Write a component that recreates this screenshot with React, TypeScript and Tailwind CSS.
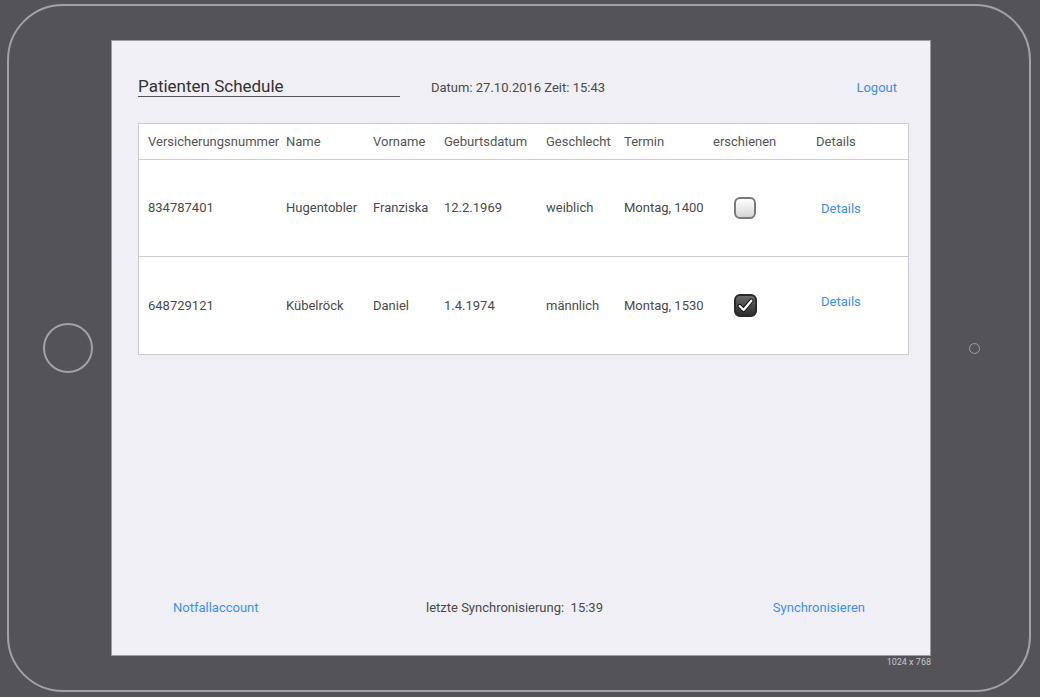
import React from "react";

const cols = [138, 87, 71, 102, 78, 89, 103];

function Box({ checked }: { checked: boolean }) {
  if (!checked) {
    return (
      <div className="w-[22px] h-[22px] rounded-[6px] border-2 border-[#7a7a7a] bg-gradient-to-b from-[#ffffff] to-[#d6d6d8]" />
    );
  }
  return (
    <div className="w-[23px] h-[23px] rounded-[6px] border-2 border-[#2a2a2a] bg-gradient-to-b from-[#6a6a6a] to-[#2e2e2e] flex items-center justify-center">
      <svg width="17" height="17" viewBox="0 0 16 16">
        <path d="M2.5 8.5 L6.2 12.2 L13.5 3.5" fill="none" stroke="#111" strokeWidth="4" strokeLinecap="round" strokeLinejoin="round" />
        <path d="M2.5 8.5 L6.2 12.2 L13.5 3.5" fill="none" stroke="#fff" strokeWidth="2.2" strokeLinecap="round" strokeLinejoin="round" />
      </svg>
    </div>
  );
}

const rows = [
  { nr: "834787401", name: "Hugentobler", vor: "Franziska", geb: "12.2.1969", ges: "weiblich", ter: "Montag, 1400", chk: false, dy: "mt-[2px]" },
  { nr: "648729121", name: "Kübelröck", vor: "Daniel", geb: "1.4.1974", ges: "männlich", ter: "Montag, 1530", chk: true, dy: "-mt-[8px]" },
];

export default function App() {
  return (
    <div className="w-[1040px] h-[697px] bg-[#545358] pt-[4px] pl-[7px] overflow-hidden" style={{ fontFamily: "Roboto, 'Liberation Sans', sans-serif" }}>
      <div className="w-[1024px] h-[688px] rounded-[56px] border-2 border-[#a2a1a6] flex items-center">
        <div className="ml-[34px] w-[50px] h-[50px] rounded-full border-2 border-[#a2a1a6] shrink-0" />
        <div className="relative ml-[18px] shrink-0">
          <div className="w-[820px] h-[616px] border border-[#9e9ea2] bg-[#efeff5] flex flex-col pl-[26px] pr-[21px]">
            <div className="flex items-end mt-[34px] h-[22px]">
              <div className="w-[262px] h-[22px] border-b border-[#555] text-[17px] leading-[20px] text-[#333] pt-[1px]">Patienten Schedule</div>
              <div className="ml-[31px] text-[13px] leading-[18px] text-[#4a4a4a]">Datum: 27.10.2016 Zeit: 15:43</div>
              <div className="ml-auto mr-[12px] text-[13px] leading-[18px] text-[#3b8ff5]">Logout</div>
            </div>
            <div className="mt-[26px] w-[771px] bg-white border border-[#cdcdd0]">
              <div className="flex items-center h-[36px] border-b border-[#cdcdd0] pl-[9px] text-[13px] text-[#555]">
                {["Versicherungsnummer", "Name", "Vorname", "Geburtsdatum", "Geschlecht", "Termin", "erschienen"].map((t, i) => (
                  <div key={t} style={{ width: cols[i] }} className="shrink-0 whitespace-nowrap">{t}</div>
                ))}
                <div>Details</div>
              </div>
              {rows.map((r, ri) => (
                <div key={r.nr} className={`flex items-center pl-[9px] text-[13px] text-[#4a4a4a] ${ri === 0 ? "border-b border-[#cdcdd0] h-[97px]" : "h-[97px]"}`}>
                  {[r.nr, r.name, r.vor, r.geb, r.ges, r.ter].map((t, i) => (
                    <div key={i} style={{ width: cols[i] }} className="shrink-0 whitespace-nowrap">{t}</div>
                  ))}
                  <div style={{ width: cols[6] }} className="shrink-0 pl-[21px]">
                    <Box checked={r.chk} />
                  </div>
                  <div className={`pl-[5px] text-[#3b8ff5] ${r.dy}`}>Details</div>
                </div>
              ))}
            </div>
            <div className="flex-1" />
            <div className="flex items-center mb-[38px] text-[13px] h-[18px]">
              <div className="w-[288px] pl-[35px] text-[#3b8ff5]">Notfallaccount</div>
              <div className="text-[#4a4a4a] whitespace-pre">letzte Synchronisierung:  15:39</div>
              <div className="ml-auto mr-[44px] text-[#3b8ff5]">Synchronisieren</div>
            </div>
          </div>
          <div className="absolute right-0 top-full mt-[1px] text-[9px] leading-[10px] text-[#c8c8cc]">1024 x 768</div>
        </div>
        <div className="ml-[38px] w-[11px] h-[11px] rounded-full border border-[#a2a1a6] shrink-0" />
      </div>
    </div>
  );
}
